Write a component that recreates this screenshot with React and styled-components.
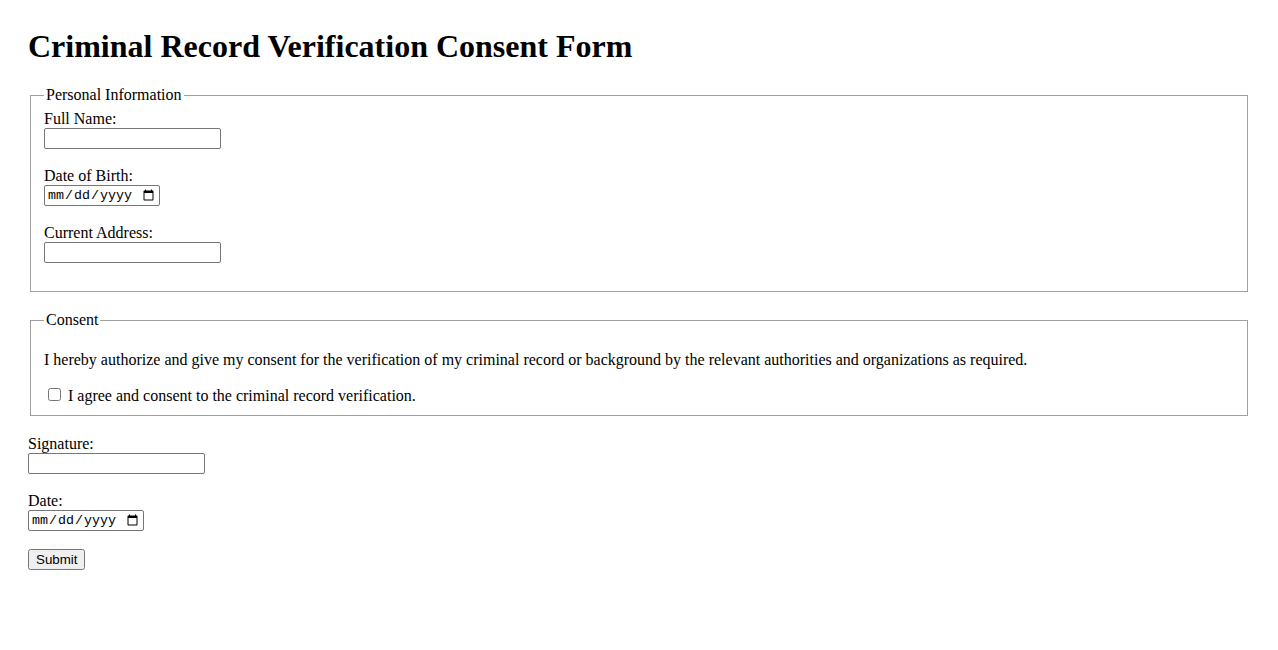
import React from "react";
import styled, { createGlobalStyle } from "styled-components";

const GlobalStyle = createGlobalStyle`
    body {
        margin: 0;
        background: #fff;
        color: #000;
        font-family: "Liberation Serif", "Times New Roman", serif;
        font-size: 16px;
    }
`

const Page = styled.div`
    padding: 28px;
`

const Title = styled.h1`
    font-size: 32px;
    font-weight: bold;
    margin: 0 0 21px;
`

const Group = styled.fieldset`
    margin: 0 2px 19px;
    padding: 6px 12px 10px 13px;
    border: 1px solid #a0a0a0;
`

const Legend = styled.legend`
    padding: 0 2px;
`

const Field = styled.div`
    margin-bottom: 18px;
`

const Label = styled.label`
    display: block;
`

const TextInput = styled.input`
    box-sizing: border-box;
    width: ${props => props.type === "date" ? "116px" : "177px"};
    height: 21px;
    font-family: ${props => props.type === "date"
        ? '"Liberation Mono", "DejaVu Sans Mono", monospace'
        : 'Arial, "Liberation Sans", sans-serif'};
    font-size: 13.33px;
    border: 1px solid #767676;
    border-radius: 2px;
    padding: 1px 2px;
`

const Note = styled.p`
    margin: 16px 0;
`

const CheckRow = styled.label`
    display: block;
`

const SubmitButton = styled.button`
    font-family: Arial, "Liberation Sans", sans-serif;
    font-size: 13.33px;
    padding: 1px 6px;
`

export default function App() {
    return (
        <Page>
            <GlobalStyle />
            <Title>Criminal Record Verification Consent Form</Title>
            <form onSubmit={e => e.preventDefault()}>
                <Group>
                    <Legend>Personal Information</Legend>
                    <Field>
                        <Label htmlFor="fullName">Full Name:</Label>
                        <TextInput type="text" id="fullName" />
                    </Field>
                    <Field>
                        <Label htmlFor="dob">Date of Birth:</Label>
                        <TextInput type="date" id="dob" />
                    </Field>
                    <Field>
                        <Label htmlFor="address">Current Address:</Label>
                        <TextInput type="text" id="address" />
                    </Field>
                </Group>
                <Group>
                    <Legend>Consent</Legend>
                    <Note>I hereby authorize and give my consent for the verification of my criminal record or background by the relevant authorities and organizations as required.</Note>
                    <CheckRow>
                        <input type="checkbox" /> I agree and consent to the criminal record verification.
                    </CheckRow>
                </Group>
                <Field>
                    <Label htmlFor="signature">Signature:</Label>
                    <TextInput type="text" id="signature" />
                </Field>
                <Field>
                    <Label htmlFor="date">Date:</Label>
                    <TextInput type="date" id="date" />
                </Field>
                <SubmitButton type="submit">Submit</SubmitButton>
            </form>
        </Page>
    )
}
